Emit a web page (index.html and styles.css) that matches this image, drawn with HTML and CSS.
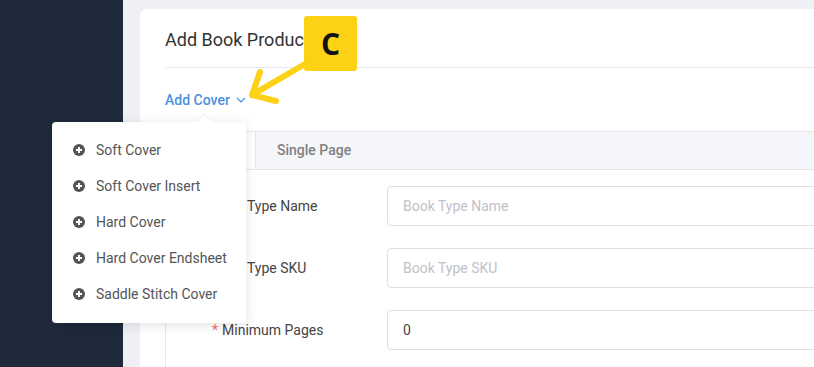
FILE: index.html
```html
<!DOCTYPE html>
<html lang="en">
<head>
    <meta charset="UTF-8">
    <title>Add Book Product</title>
    <link rel="stylesheet" href="styles.css">
</head>
<body>
    <div class="layout">
        <aside class="sidebar"></aside>
        <main class="main">
            <div class="card">
                <div class="card-header">Add Book Product</div>

                <div class="dropdown">
                    <span class="dropdown-toggle">Add Cover
                        <svg class="chevron" width="10" height="6" viewBox="0 0 10 6"><path d="M1 1l4 4 4-4" fill="none" stroke="#4a90e2" stroke-width="1.2"/></svg>
                    </span>
                    <ul class="dropdown-menu">
                        <li><span class="plus"></span>Soft Cover</li>
                        <li><span class="plus"></span>Soft Cover Insert</li>
                        <li><span class="plus"></span>Hard Cover</li>
                        <li><span class="plus"></span>Hard Cover Endsheet</li>
                        <li><span class="plus"></span>Saddle Stitch Cover</li>
                    </ul>
                </div>

                <div class="tabs">
                    <div class="tab active">Book</div>
                    <div class="tab">Single Page</div>
                </div>

                <div class="tab-panel">
                    <div class="form-row">
                        <label>Book Type Name</label>
                        <input type="text" placeholder="Book Type Name">
                    </div>
                    <div class="form-row">
                        <label>Book Type SKU</label>
                        <input type="text" placeholder="Book Type SKU">
                    </div>
                    <div class="form-row">
                        <label><span class="req">*</span>Minimum Pages</label>
                        <input type="text" value="0">
                    </div>
                </div>
            </div>
        </main>
    </div>

    <!-- annotation -->
    <div class="callout">C</div>
    <svg class="callout-arrow" width="80" height="60" viewBox="0 0 80 60">
        <g fill="none" stroke="#fcd116" stroke-width="6" stroke-linecap="round" stroke-linejoin="round">
            <path d="M58 4L5 35"/>
            <path d="M13 12L5 35L29 41"/>
        </g>
    </svg>
</body>
</html>
```

FILE: styles.css
```css
body {
    margin: 0;
    font-family: Roboto, "Liberation Sans", Arial, sans-serif;
    font-size: 14px;
    color: #444;
    overflow: hidden;
}
.layout {
    display: flex;
    height: 367px;
    overflow: hidden;
}
.sidebar {
    width: 123px;
    flex-shrink: 0;
    background-color: #1e293b;
}
.main {
    flex: 1;
    min-width: 0;
    background-color: #eef0f5;
    padding: 9px 0 0 17px;
}
.card {
    height: 390px;
    margin-right: -20px;
    background-color: white;
    border-radius: 6px;
    padding-left: 25px;
}
.card-header {
    height: 58px;
    line-height: 62px;
    font-size: 18px;
    color: #333;
    border-bottom: 1px solid #e6e8ec;
}
.dropdown {
    position: relative;
    height: 63px;
    padding-top: 24px;
    box-sizing: border-box;
}
.dropdown-toggle {
    color: #4a90e2;
    font-weight: 500;
    font-size: 14px;
}
.chevron {
    margin-left: 3px;
    vertical-align: 2px;
}
.dropdown-menu {
    position: absolute;
    left: -113px;
    top: 54px;
    width: 194px;
    margin: 0;
    padding: 10px 0 11px;
    list-style: none;
    background-color: white;
    border-radius: 4px;
    box-shadow: 0 2px 12px rgba(0,0,0,0.12);
    z-index: 5;
}
.dropdown-menu::before {
    content: "";
    position: absolute;
    top: -5px;
    left: 148px;
    width: 9px;
    height: 9px;
    background-color: white;
    transform: rotate(45deg);
    box-shadow: -1px -1px 2px rgba(0,0,0,0.05);
}
.dropdown-menu li {
    height: 36px;
    display: flex;
    align-items: center;
    padding-left: 21px;
    color: #555;
    font-size: 14px;
}
.plus {
    position: relative;
    width: 12px;
    height: 12px;
    border-radius: 50%;
    background-color: #555;
    margin-right: 11px;
}
.plus::before,
.plus::after {
    content: "";
    position: absolute;
    background-color: white;
}
.plus::before {
    left: 3px;
    top: 5px;
    width: 6px;
    height: 2px;
}
.plus::after {
    left: 5px;
    top: 3px;
    width: 2px;
    height: 6px;
}
.tabs {
    display: flex;
    height: 37px;
    background-color: #f5f6fa;
    border: 1px solid #e4e7ed;
}
.tab {
    padding: 0 21px;
    line-height: 37px;
    color: #808080;
    font-weight: 500;
}
.tab.active {
    width: 89px;
    padding: 0;
    background-color: white;
    border-right: 1px solid #e4e7ed;
    color: #4a90e2;
    text-align: center;
}
.tab-panel {
    border-left: 1px solid #e4e7ed;
    padding: 16px 0 30px;
}
.form-row {
    display: flex;
    align-items: center;
    margin-bottom: 22px;
}
.form-row label {
    width: 221px;
    padding-left: 46px;
    box-sizing: border-box;
    color: #444;
}
.req {
    color: #f56c6c;
    margin-right: 4px;
}
.form-row input {
    flex: 1;
    height: 40px;
    box-sizing: border-box;
    border: 1px solid #dcdfe6;
    border-radius: 4px;
    padding: 0 15px;
    font-family: inherit;
    font-size: 14px;
    color: #444;
}
.form-row input::placeholder {
    color: #bfc2c8;
}
.callout {
    position: absolute;
    left: 304px;
    top: 16px;
    width: 53px;
    height: 55px;
    background-color: #fcd116;
    border-radius: 3px;
    font-family: "Open Sans", "Liberation Sans", sans-serif;
    font-weight: 700;
    font-size: 30px;
    line-height: 55px;
    text-align: center;
    color: #111;
}
.callout-arrow {
    position: absolute;
    left: 247px;
    top: 60px;
}
```
